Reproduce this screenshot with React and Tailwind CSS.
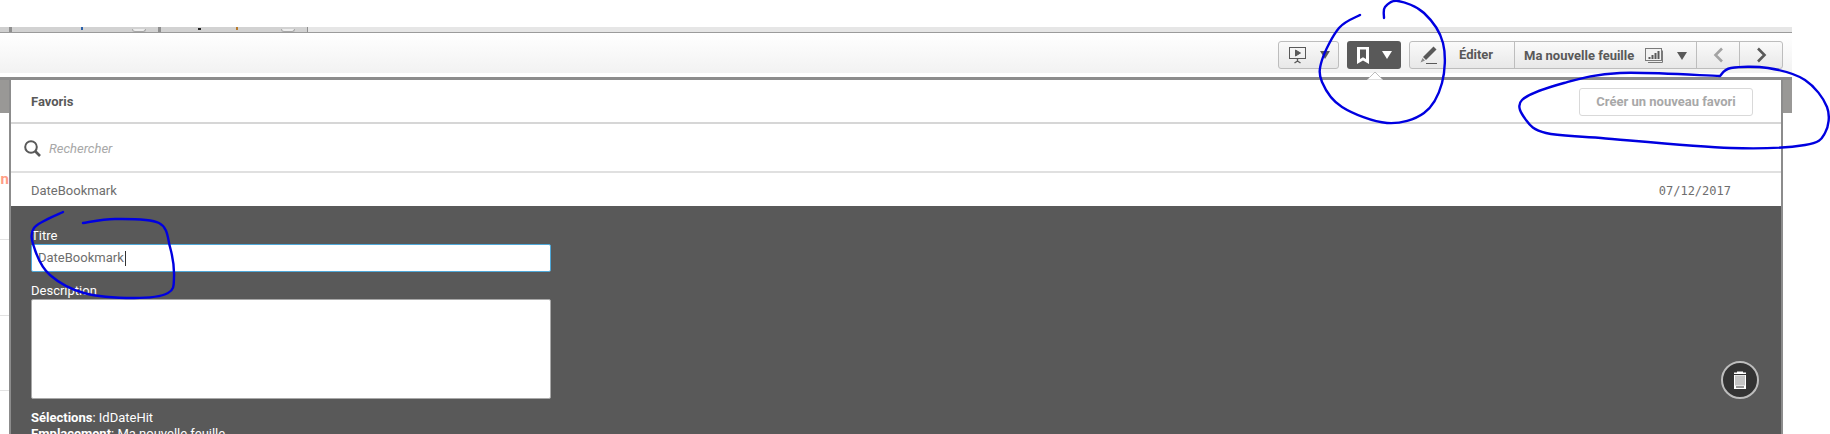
const smooth = (pts) => {
  let d = `M${pts[0][0]} ${pts[0][1]}`;
  for (let i = 0; i < pts.length - 1; i++) {
    const p0 = pts[i - 1] || pts[i];
    const p1 = pts[i];
    const p2 = pts[i + 1];
    const p3 = pts[i + 2] || p2;
    d += ` C${p1[0] + (p2[0] - p0[0]) / 6} ${p1[1] + (p2[1] - p0[1]) / 6} ${p2[0] - (p3[0] - p1[0]) / 6} ${p2[1] - (p3[1] - p1[1]) / 6} ${p2[0]} ${p2[1]}`;
  }
  return d;
};

const scribbles = [
  [[1360, 15], [1339, 28], [1322, 60], [1322, 82], [1342, 107], [1387, 123], [1424, 113], [1442, 83], [1443, 43], [1424, 13], [1398, 1], [1385, 7], [1384, 18]],
  [[1720, 76], [1620, 73], [1564, 83], [1522, 100], [1526, 120], [1546, 133], [1601, 138], [1731, 148], [1805, 145], [1825, 133], [1827, 107], [1805, 80], [1768, 68], [1731, 68], [1720, 76]],
  [[63, 212], [34, 228], [35, 250], [50, 275], [84, 293], [134, 298], [168, 293], [174, 277], [170, 247], [159, 223], [115, 219], [83, 223]],
];

const Caret = ({ className }) => (
  <svg width="10" height="8" viewBox="0 0 10 8" className={className}>
    <path d="M0 0h10L5 8z" fill="currentColor" />
  </svg>
);

const Tab = ({ children }) => (
  <div className="relative w-[146px] h-full bg-[#d2d2d2] flex justify-end pr-[12px]">
    {children}
    <div className="w-[14px] h-[3px] mt-[2px] bg-[#ececec] border-b border-x border-[#a8a8a8] rounded-b-sm" />
  </div>
);

const App = () => {
  return (
    <div
      className="relative w-[1830px] h-[434px] overflow-hidden bg-white flex flex-col text-[13px] text-[#595959]"
      style={{ fontFamily: "Roboto, sans-serif" }}
    >
      <div className="h-[27px] shrink-0" />

      {/* browser tabs, cut off */}
      <div className="w-[1792px] h-[5px] shrink-0 flex bg-[#e6e6e6]">
        <div className="w-[9px] bg-[#cfcfcf]" />
        <div className="w-[3px] bg-[#8f8f8f]" />
        <Tab>
          <span className="absolute left-[69px] top-0 w-[2px] h-[3px] bg-[#2a5fa8]" />
        </Tab>
        <div className="w-[3px] bg-[#8f8f8f]" />
        <Tab>
          <span className="absolute left-[37px] top-[1px] w-[3px] h-[2px] bg-[#222]" />
          <span className="absolute left-[75px] top-0 w-[2px] h-[3px] bg-[#b87a2a]" />
        </Tab>
        <div className="w-[1px] bg-[#8f8f8f]" />
      </div>
      <div className="w-[1792px] h-[1px] shrink-0 bg-[#9b9b9b]" />

      {/* toolbar */}
      <div className="w-[1792px] h-[40px] shrink-0 flex justify-end items-start pt-[8px] pr-[9px] gap-[8px] bg-gradient-to-b from-white to-[#f2f2f2]">
        <div className="w-[61px] h-[28px] flex items-center justify-center gap-[13px] rounded-[3px] border border-[#bdbdbd] bg-gradient-to-b from-[#fafafa] to-[#e8e8e8]">
          <svg width="19" height="18" viewBox="0 0 19 18" fill="none" stroke="#595959">
            <rect x="1.5" y="1.5" width="16" height="11" />
            <path d="M7.5 4v6l5-3z" fill="#595959" />
            <path d="M9.5 13v2M6.5 17l3-2 3 2" strokeWidth="1.4" />
          </svg>
          <Caret className="text-[#595959]" />
        </div>
        <div className="w-[54px] h-[28px] flex items-center justify-center gap-[13px] rounded-[3px] bg-[#595959]">
          <svg width="12" height="17" viewBox="0 0 12 17">
            <path fillRule="evenodd" d="M0 0h12v17L6 13.5 0 17zM3 2.5v9.5l3-1.8 3 1.8V2.5z" fill="#fff" />
          </svg>
          <Caret className="text-white" />
        </div>
        <div className="flex h-[28px] w-[374px] rounded-[3px] border border-[#bdbdbd] bg-gradient-to-b from-[#fafafa] to-[#e8e8e8] font-bold">
          <div className="w-[105px] flex items-center pl-[10px] border-r border-[#bdbdbd]">
            <svg width="18" height="18" viewBox="0 0 18 18" fill="none">
              <path d="M13.500 0.500l3 3L6 14l-3-3z" fill="#595959" />
              <path d="M2.500 12l2.500 2.500L0.500 16.500z" fill="#8a8a8a" />
              <path d="M6 17.500h11" stroke="#595959" />
            </svg>
            <span className="ml-[21px]">Éditer</span>
          </div>
          <div className="w-[182px] flex items-center pl-[9px] border-r border-[#bdbdbd] pt-[1px]">
            <span className="w-[109px] whitespace-nowrap">Ma nouvelle feuille</span>
            <svg width="19" height="15" viewBox="0 0 19 15" fill="none" stroke="#7a7a7a" className="ml-[12px]">
              <path d="M17.500 2.500V14.500H3" />
              <rect x="0.500" y="0.500" width="16" height="12" fill="#f2f2f2" />
              <path d="M4.500 11V9M7.500 11V7M10.500 11V5M13.500 11V3" stroke="#595959" strokeWidth="2" />
            </svg>
            <Caret className="ml-[13px] text-[#595959]" />
          </div>
          <div className="w-[43px] flex items-center justify-center border-r border-[#bdbdbd]">
            <svg width="11" height="16" viewBox="0 0 11 16" fill="none" stroke="#a3a3a3" strokeWidth="2.6">
              <path d="M9 1.500L2.500 8 9 14.500" />
            </svg>
          </div>
          <div className="flex-1 flex items-center justify-center">
            <svg width="11" height="16" viewBox="0 0 11 16" fill="none" stroke="#595959" strokeWidth="2.6">
              <path d="M2 1.500L8.500 8 2 14.500" />
            </svg>
          </div>
        </div>
      </div>

      <div className="h-[4px] shrink-0" />
      <div className="relative w-[1792px] h-[3px] shrink-0 bg-[#8c8c8c]">
        {/* popover notch under the bookmark button */}
        <svg width="16" height="8" viewBox="0 0 16 8" className="absolute left-[1367px] top-[-5px]">
          <path d="M0 8L8 0l8 8z" fill="#fff" stroke="#bdbdbd" />
        </svg>
      </div>

      <div className="flex flex-1 min-h-0">
        {/* sheet behind the popover */}
        <div className="w-[9px] shrink-0 flex flex-col">
          <div className="h-[33px] bg-[#999896]" />
          <div className="h-[64px] relative">
            <span className="absolute right-0 top-[59px] text-[15px] font-bold leading-none text-[#ff9d85]">n</span>
          </div>
          <div className="h-[63px] border-b border-[#e2e2e2]" />
          <div className="h-[76px] border-b border-[#e2e2e2]" />
          <div className="h-[75px] border-b border-[#e2e2e2]" />
        </div>

        <div className="w-[1774px] shrink-0 flex flex-col border-l-2 border-r-2 border-[#8c8c8c]">
          <div className="h-[44px] shrink-0 flex items-center justify-between pt-[2px] pl-[20px] pr-[28px] border-b-2 border-[#d6d6d6]">
            <span className="font-bold">Favoris</span>
            <button className="w-[174px] h-[28px] rounded-[3px] border border-[#d9d9d9] bg-white font-bold text-[#a8a8a8]">
              Créer un nouveau favori
            </button>
          </div>
          <div className="h-[49px] shrink-0 flex items-center pt-[2px] pl-[13px] border-b-2 border-[#e0e0e0]">
            <svg width="17" height="17" viewBox="0 0 17 17" fill="none" stroke="#595959" strokeWidth="2">
              <circle cx="7" cy="7" r="5.800" />
              <path d="M11 11l5 5" strokeWidth="2.600" />
            </svg>
            <span className="ml-[8px] italic text-[#a8a8a8]">Rechercher</span>
          </div>
          <div className="h-[33px] shrink-0 flex items-center justify-between pt-[2px] pl-[20px] pr-[50px]">
            <span className="text-[#6e6e6e]">DateBookmark</span>
            <span className="text-[12px] text-[#6e6e6e]" style={{ fontFamily: "'DejaVu Sans Mono', monospace" }}>
              07/12/2017
            </span>
          </div>

          <div className="flex-1 flex justify-between bg-[#595959] text-white">
            <div className="w-[540px] pl-[20px] pt-[20px] shrink-0">
              <div className="h-[18px] leading-[20px]">Titre</div>
              <div className="h-[28px] flex items-center pl-[6px] rounded-[2px] border border-[#4fa8d8] bg-white text-[#6e6e6e]">
                DateBookmark
                <span className="w-[1px] h-[15px] ml-[1px] bg-[#333]" />
              </div>
              <div className="h-[27px] pt-[9px] leading-[20px]">Description</div>
              <div className="h-[100px] rounded-[2px] border border-[#a8a8a8] bg-white" />
              <div className="mt-[11px] leading-[16px] whitespace-nowrap">
                <div><b>Sélections</b>: IdDateHit</div>
                <div><b>Emplacement</b>: Ma nouvelle feuille</div>
              </div>
            </div>
            <div className="mt-[155px] mr-[22px] w-[38px] h-[38px] rounded-full border-2 border-[#bdbdbd] bg-[#333] flex items-center justify-center">
              <svg width="14" height="18" viewBox="0 0 14 18">
                <path d="M4 0.500h6v1h3V3H1V1.500h3z" fill="#fff" />
                <path d="M1 4h12v14H1z" fill="#fff" />
                <path d="M2 4.500h10v10H2z" fill="#c4c4c4" />
                <path d="M3 16h8" stroke="#333" />
              </svg>
            </div>
          </div>
        </div>

        <div className="w-[9px] h-[33px] shrink-0 bg-[#999896]" />
      </div>

      {/* pen marks drawn on top of the screenshot */}
      <svg width="1830" height="434" className="absolute inset-0 pointer-events-none" fill="none" stroke="#0000e0" strokeWidth="2.4" strokeLinecap="round">
        {scribbles.map((pts, i) => (
          <path key={i} d={smooth(pts)} />
        ))}
      </svg>
    </div>
  );
};

export default App;
